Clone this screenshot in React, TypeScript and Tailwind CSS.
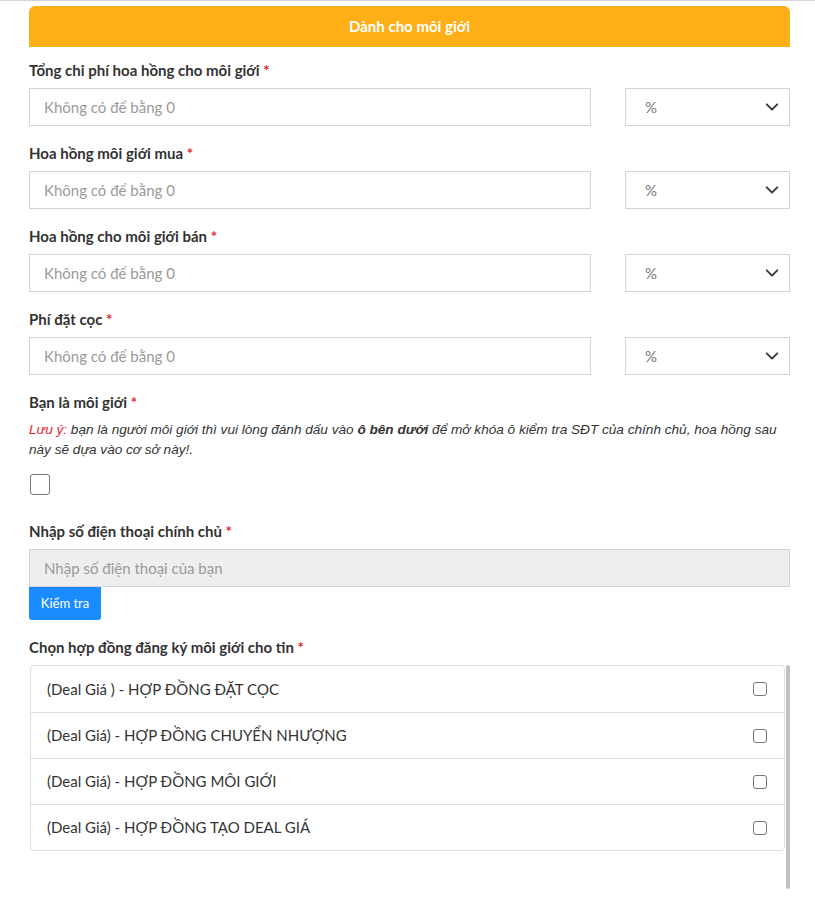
import React from "react";

const font = { fontFamily: "Lato, 'Noto Sans', sans-serif" };

function Label({ children }: { children: React.ReactNode }) {
  return (
    <div className="text-[15px] font-bold text-[#333] leading-[19px]">
      {children} <span className="text-[#e3262e]">*</span>
    </div>
  );
}

function Chevron() {
  return (
    <svg width="14" height="14" viewBox="0 0 16 16" fill="none">
      <path d="M2 5l6 6 6-6" stroke="#343a40" strokeWidth="2.2" strokeLinecap="round" strokeLinejoin="round" />
    </svg>
  );
}

function Row({ label }: { label: string }) {
  return (
    <div>
      <Label>{label}</Label>
      <div className="mt-[8px] flex items-center justify-between">
        <div className="w-[562px] h-[38px] border border-[#d3d3de] flex items-center px-[14px] text-[15px] text-[#9a9a9a]">
          Không có để bằng 0
        </div>
        <div className="w-[165px] h-[38px] border border-[#d3d3de] flex items-center justify-between pl-[19px] pr-[10px] text-[15px] text-[#777]">
          <span>%</span>
          <Chevron />
        </div>
      </div>
    </div>
  );
}

const items = [
  "(Deal Giá ) - HỢP ĐỒNG ĐẶT CỌC",
  "(Deal Giá) - HỢP ĐỒNG CHUYỂN NHƯỢNG",
  "(Deal Giá) - HỢP ĐỒNG MÔI GIỚI",
  "(Deal Giá) - HỢP ĐỒNG TẠO DEAL GIÁ",
];

export default function App() {
  return (
    <div className="w-[815px] h-[901px] bg-white border-t border-[#d6d6d6] overflow-hidden" style={font}>
      <div className="ml-[29px] w-[761px] pt-[5px]">
        <div className="h-[41px] bg-[#feaf17] rounded-t-[6px] flex items-center justify-center text-white font-bold text-[15px]">
          Dành cho môi giới
        </div>
        <div className="mt-[14px] flex flex-col gap-[18px]">
          <Row label="Tổng chi phí hoa hồng cho môi giới" />
          <Row label="Hoa hồng môi giới mua" />
          <Row label="Hoa hồng cho môi giới bán" />
          <Row label="Phí đặt cọc" />
        </div>
        <div className="mt-[18px]">
          <Label>Bạn là môi giới</Label>
          <p className="mt-[8px] text-[13.6px] italic leading-[20px] text-[#333]" style={{ fontFamily: "'Liberation Sans', Arial, sans-serif" }}>
            <span className="text-[#e3262e]">Lưu ý:</span> bạn là người môi giới thì vui lòng đánh dấu vào <b>ô bên dưới</b> để mở khóa ô kiểm tra SĐT của chính chủ, hoa hồng sau này sẽ dựa vào cơ sở này!.
          </p>
          <div className="mt-[14px] ml-[1px] w-[20px] h-[21px] border border-[#767676] rounded-[3px] bg-white"></div>
        </div>
        <div className="mt-[27px]">
          <Label>Nhập số điện thoại chính chủ</Label>
          <div className="mt-[8px] h-[38px] bg-[#eeeeee] border border-[#d3d3de] flex items-center px-[14px] text-[15px] text-[#9a9a9a]">
            Nhập số điện thoại của bạn
          </div>
          <div className="w-[72px] h-[33px] bg-[#1a8cff] rounded-b-[3px] flex items-center justify-center text-white text-[13px]">
            Kiểm tra
          </div>
        </div>
        <div className="mt-[18px]">
          <Label>Chọn hợp đồng đăng ký môi giới cho tin</Label>
          <div className="mt-[8px] flex items-start h-[224px]">
            <div className="ml-[1px] w-[755px] border border-[#dedede] rounded-[4px]">
              {items.map((t, i) => (
                <div key={i} className={"h-[46px] flex items-center justify-between pl-[16px] pr-[17px] text-[15px] text-[#333] " + (i > 0 ? "border-t border-[#dedede]" : "")}>
                  <span>{t}</span>
                  <div className="w-[14px] h-[14px] border border-[#767676] rounded-[3px]"></div>
                </div>
              ))}
            </div>
            <div className="ml-[1px] w-[4px] h-[224px] bg-[#c1c1c1] rounded-full"></div>
          </div>
        </div>
      </div>
    </div>
  );
}
